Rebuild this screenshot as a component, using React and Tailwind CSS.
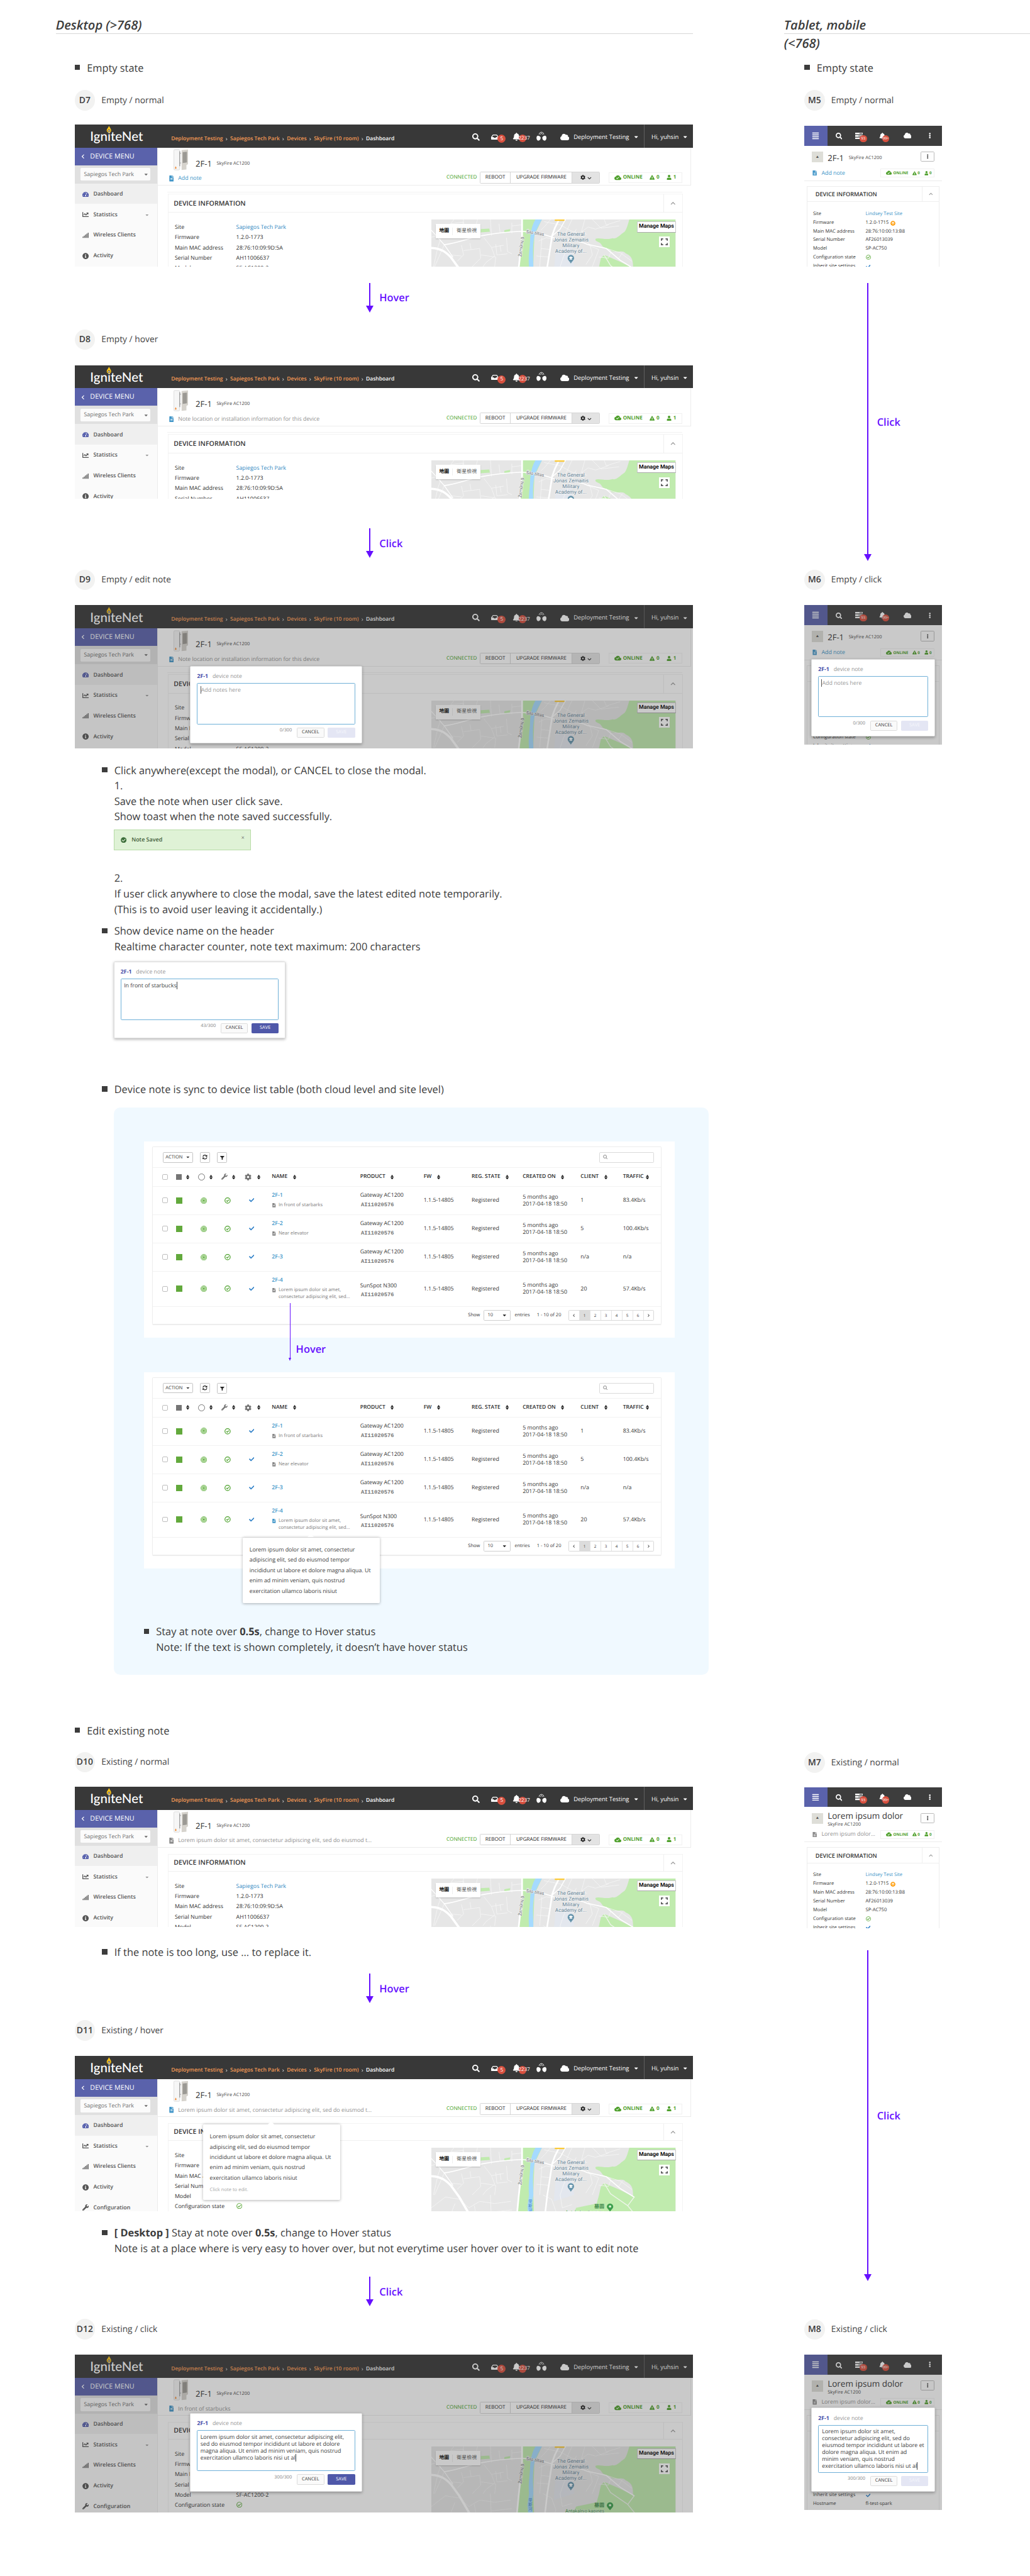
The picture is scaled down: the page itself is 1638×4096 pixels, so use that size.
import React from "react";
import {
  FaSearch, FaInbox, FaBell, FaCloud, FaCaretDown, FaTachometerAlt, FaChartLine, FaSignal,
  FaInfoCircle, FaWrench, FaFileAlt, FaCog, FaChevronDown, FaChevronUp, FaChevronLeft, FaChevronRight,
  FaExclamationTriangle, FaUser, FaCheck, FaSyncAlt, FaFilter, FaRegCheckCircle,
  FaArrowCircleUp, FaAlignJustify, FaEllipsisV, FaCheckCircle,
} from "react-icons/fa";
import { MdCloudDone } from "react-icons/md";

const WIDE_NOTE = [
  "Lorem ipsum dolor sit amet, consectetur adipiscing elit,",
  "sed do eiusmod tempor incididunt ut labore et dolore",
  "magna aliqua. Ut enim ad minim veniam, quis nostrud",
  "exercitation ullamco laboris nisi ut al",
];
const NARROW_NOTE = [
  "Lorem ipsum dolor sit amet,",
  "consectetur adipiscing elit, sed do",
  "eiusmod tempor incididunt ut labore et",
  "dolore magna aliqua. Ut enim ad",
  "minim veniam, quis nostrud",
  "exercitation ullamco laboris nisi ut al",
];

/* ---------- annotation pieces ---------- */

function ColumnTitle({ children, className = "" }) {
  return (
    <div className={"h-[63px] border-b-[1.5px] border-[#d6d6d6] pt-[31px] " + className}>
      <h1 className="w-[185px] text-[23.5px] leading-[33px] font-semibold text-[#3c3c3c] italic">{children}</h1>
    </div>
  );
}

function Bullet({ children, className = "" }) {
  return (
    <div className={"flex text-[19.2px] leading-[28.8px] text-[#3c3c3c] " + className}>
      <span className="mt-[9px] mr-[13px] size-[10px] shrink-0 bg-[#3c3c3c]" />
      <div className="pt-[0.5px]">{children}</div>
    </div>
  );
}

function StateLabel({ id, children, className = "" }) {
  return (
    <div className={"flex h-[38px] items-center " + className}>
      <span className="flex size-[38px] shrink-0 items-center justify-center rounded-full bg-[#f2f2f1] pt-[2px] text-[16.3px] font-semibold text-[#3c3c3c]">{id}</span>
      <span className="ml-[12px] pt-[1px] text-[16.2px] text-[#454545]">{children}</span>
    </div>
  );
}

function FlowArrow({ label, className = "" }) {
  return (
    <div className={"flex text-[#6610ff] " + className}>
      <div className="flex w-[15px] flex-col items-center">
        <span className="w-[2.3px] flex-1 bg-[#6610ff]" />
        <span className="h-0 w-0 border-x-[7.5px] border-t-[14px] border-x-transparent border-t-[#6610ff]" />
      </div>
      <span className="ml-[10px] self-center text-[19.2px] leading-[28px] font-semibold">{label}</span>
    </div>
  );
}

/* ---------- map ---------- */

function CityMap() {
  return (
    <svg viewBox="0 0 455 140" className="block h-[140px] w-[455px]">
      <rect width="455" height="140" fill="#e6e6e6" />
      <path d="M232 55 L262 52 L266 88 L228 100 Z" fill="#e3e7ee" />
      <path d="M170 0 L206 0 L192 30 L190 88 L192 140 L158 140 L164 88 L170 40 Z" fill="#c0ebae" />
      <path d="M92 18 L108 17 L109 23 L92 24 Z M136 20 L147 18 L146 23 L136 24 Z" fill="#c0ebae" />
      <path d="M369 0 C366 10 364 18 360 23 C350 30 345 37 338 35 C325 39 312 33 306 36 C304 42 314 40 317 47 C322 56 332 52 336 59 C348 62 356 56 362 63 C372 68 376 72 376 90 L376 140 L455 140 L455 0 Z" fill="#c0ebae" />
      <path d="M312 90 L316 72 L322 66 L350 78 L378 92 L378 140 L255 140 L270 112 L308 104 Z" fill="#c0ebae" />
      <path d="M194 0 L206 0 C201 10 193 22 191 36 C188 55 190 75 190 88 L187 110 L192 140 L182 140 L179 110 L182 88 C180 70 184 50 184 38 C185 20 189 8 194 0 Z" fill="#a5daff" />
      <g fill="none" stroke="#f7f7f7" strokeWidth="0.9">
        <path d="M0 33 L20 28 L36 8 L42 0 M20 28 L12 52 L4 88 M24 47 L6 88 M36 8 L60 5 L64 26 L74 30 M60 0 L58 12 M86 0 L82 16 L92 26 L90 34 M110 0 L112 30 M98 34 L106 44 L112 52 L135 48 M112 52 L118 68 L102 80 L96 88 M56 48 L60 66 L48 78 M60 58 L90 54 L92 72 L76 88 M72 44 L74 56 M92 66 L120 70 L118 88 M120 46 L122 66 L142 64 M128 48 L130 60 M140 34 L142 60 L150 64 M150 6 L150 26 M150 12 L168 10 M126 8 L128 24 M36 66 L56 68 M12 14 L24 18 M70 16 L82 16" />
        <path d="M0 112 L26 92 L52 96 L70 112 L90 100 L118 104 L148 100 M30 140 L44 104 M80 108 L86 140 M110 88 L112 140 M112 120 L150 116" />
        <path d="M222 0 L212 12 L204 20 M210 4 L240 10 L262 22 L276 26 L292 14 L306 18 L330 10 M262 0 L250 26 M286 0 L280 22 L290 28 M300 0 L316 16 L350 12 M322 0 L326 10 L352 2 M276 26 L296 48 L300 66 L288 84 M270 18 L246 70 L240 88 M226 36 L214 34 L200 40 M222 56 L204 54 M220 70 L196 68 M206 34 L202 88 M284 44 L312 56 L300 88 M326 54 L352 62 L374 78 M334 62 L330 72 L312 70 M356 62 L348 74 M208 88 L224 96 L232 118 L226 140 M240 88 L244 112 L262 106" />
      </g>
      <g fill="none" stroke="#fff" strokeLinecap="round">
        <path d="M0 53 C20 54 28 62 36 70 L52 92 L80 140" strokeWidth="4.2" />
        <path d="M24 47 C50 44 70 34 95 30 C125 24 145 23 169 22 L200 25 L222 32" strokeWidth="2" />
        <path d="M40 70 L24 47 L0 20" strokeWidth="1.5" />
        <path d="M169 0 L169 34 L163 88 L158 140" strokeWidth="3.2" />
        <path d="M238 0 C230 14 228 20 225 30 L221 57 L216 88 L210 140" strokeWidth="3" />
        <path d="M250 0 L240 18 L226 30 M222 32 C250 44 270 36 290 46 L326 54 L352 76 L378 92" strokeWidth="1.8" />
        <path d="M378 92 L366 108 L392 140 M322 66 L334 86 L366 108" strokeWidth="1.6" stroke="#eef5ea" />
      </g>
      <rect x="230" y="0" width="18" height="2.6" fill="#fcc934" />
      <g fontFamily="Roboto, sans-serif" fill="#5f7f93" textAnchor="middle">
        <g fontSize="9.6" stroke="#f4f4f4" strokeWidth="1.6" paintOrder="stroke">
          <text x="260" y="31">The General</text>
          <text x="260" y="41.3">Jonas Zemaitis</text>
          <text x="260" y="51.6">Military</text>
          <text x="260" y="62">Academy of...</text>
        </g>
        <g fontSize="8.2" fill="#70757a" stroke="#f4f4f4" strokeWidth="1.4" paintOrder="stroke">
          <text transform="translate(193 28) rotate(9)">Šilo tiltas</text>
          <text transform="translate(170 50) rotate(-85)">Žirmūnų g.</text>
        </g>
        <text x="286" y="123" fontSize="8.6" fill="#3f8a4c" stroke="#e5f6df" strokeWidth="1.2" paintOrder="stroke">Antakalnio kapinės</text>
        <text x="313" y="113" fontSize="9.4" fontWeight="bold" fill="#3f8a4c" fontFamily="'Noto Sans CJK TC', sans-serif">墓園</text>
        <g fontSize="8" fill="#4a86c5" fontFamily="'Noto Sans CJK TC', sans-serif">
          <text x="184.5" y="103">里</text>
          <text x="184.5" y="111">斯</text>
          <text x="184.5" y="119">河</text>
        </g>
      </g>
      <path d="M260 82 C257 77 254 75 254 72 A6 6 0 0 1 266 72 C266 75 263 77 260 82 Z" fill="#6694ab" />
      <path d="M256 71 L260 69 L264 71 L260 73 Z M257.5 73 h5 v1.6 h-5 Z" fill="#fff" />
      <path d="M333 119 C330 115 327 113 327 110 A6 6 0 0 1 339 110 C339 113 336 115 333 119 Z" fill="#3c9e4d" />
      <circle cx="333" cy="109.5" r="2.2" fill="#d6f2cf" />
    </svg>
  );
}

function MapPanel() {
  return (
    <div className="relative h-[140px] w-[455px]">
      <CityMap />
      <div className="absolute top-[8px] left-[8px] flex h-[27px] items-center bg-white text-[9.3px] shadow-[0_1px_2px_rgba(0,0,0,0.2)]">
        <span className="w-[32px] border-r border-[#eee] text-center font-bold text-black">地圖</span>
        <span className="w-[51px] text-center text-[#565656]">衛星檢視</span>
      </div>
      <div className="absolute top-[3.5px] right-0 flex h-[20px] w-[72px] items-center justify-center border border-[#c9c9c9] border-b-[#aaa] bg-white font-['Roboto'] text-[10.3px] font-semibold text-black">Manage Maps</div>
      <div className="absolute top-[31px] right-[11px] flex size-[20px] items-center justify-center bg-white">
        <svg viewBox="0 0 12 12" className="size-[13px]" fill="none" stroke="#5a5a5a" strokeWidth="1.9">
          <path d="M1 4 V1 H4 M8 1 H11 V4 M11 8 V11 H8 M4 11 H1 V8" />
        </svg>
      </div>
    </div>
  );
}

/* ---------- note dialog and tooltip ---------- */

function NoteDialog({ lines = [], placeholder, count, disabled, grow = "h-[76.5px]", narrow, className = "" }) {
  return (
    <div className={"rounded-[2px] border border-[#dcdcdc] bg-white px-[11.7px] pt-[10px] shadow-[0_2px_5px_rgba(0,0,0,0.28)] " + className}>
      <div className="h-[21px] text-[10.3px] leading-[18px] text-[#959595]">
        <b className="mr-[8px] font-bold text-[#3f4ba8]">2F-1</b>device note
      </div>
      <div className={"rounded-[2px] border-[1.2px] border-[#6fb0d8] bg-white pt-[5.5px] text-[10.4px] leading-[12.85px] whitespace-nowrap " + grow + (narrow ? " pl-[6px]" : " pl-[5px]") + (placeholder ? " text-[#9a9a9a]" : " text-[#3c3c3c]")}>
        {placeholder && <span className="border-l border-[#555]">{placeholder}</span>}
        {lines.map((line, i) => (
          <div key={line}>{line}{i === lines.length - 1 && <span className="border-l border-[#444]" />}</div>
        ))}
      </div>
      <div className="mt-[6px] flex justify-end">
        <span className="mt-[-1px] mr-[9px] text-[8.7px] leading-[14px] text-[#858585]">{count}</span>
        <span className="flex h-[19px] w-[51px] items-center justify-center rounded-[2px] border border-[#dcdcdc] bg-[#fafafa] text-[8.7px] text-[#333]">CANCEL</span>
        <span className={"ml-[6.5px] flex h-[19px] w-[51px] items-center justify-center rounded-[2px] text-[8.7px] " + (disabled ? "bg-[#e4e6f4] text-[#f6f7fc]" : "bg-[#4f58a9] text-white")}>SAVE</span>
      </div>
    </div>
  );
}

function Tooltip({ hint, className = "" }) {
  return (
    <div className={"absolute rounded-[2px] bg-white pt-[13.5px] pl-[13px] shadow-[0_1px_5px_rgba(0,0,0,0.3)] " + className}>
      <span className="absolute top-[-6px] left-[121px] h-0 w-0 border-x-[7px] border-b-[7px] border-x-transparent border-b-white" />
      <p className="text-[10.4px] leading-[19.2px] whitespace-nowrap text-[#404040]">
        Lorem ipsum dolor sit amet, consectetur<br />adipiscing elit, sed do eiusmod tempor<br />incididunt ut labore et dolore magna aliqua. Ut<br />enim ad minim veniam, quis nostrud<br />exercitation ullamco laboris nisiut
      </p>
      {hint && <p className="mt-[6px] text-[8.9px] leading-[16px] text-[#a8a8a8]">{hint}</p>}
    </div>
  );
}

/* ---------- desktop frame ---------- */

function Logo() {
  return (
    <div className="relative w-[179px] shrink-0 pt-[4px] pl-[28px]">
      <span className="font-['Lato'] text-[24px] leading-[30px] text-white">IgniteNet</span>
      <svg viewBox="0 0 10 14" className="absolute top-[-2px] left-[57.5px] h-[13px] w-[10px]">
        <path d="M5 0 C6 3 9.5 6 9.5 9.5 C9.5 12 7.5 13.5 5 13.5 C2.5 13.5 0.5 12 0.5 9.5 C0.5 6 4 4 5 0 Z" fill="#fbc51b" />
        <circle cx="5" cy="10" r="2.3" fill="#383838" />
        <circle cx="5" cy="10" r="1.3" fill="#fff" />
      </svg>
    </div>
  );
}

function Antenna() {
  return (
    <svg viewBox="0 0 19 18" className="h-[18px] w-[19px]" fill="none" stroke="#fff" strokeWidth="1.1">
      <path d="M5 5.5 C6 0 13 0 14 5.5 M7.2 6 C7.6 3.2 11.4 3.2 11.8 6" />
      <path d="M0.5 10 C2 6 6.5 8.5 8 11 C8 14 7 16 4.5 17 C1.5 18 -0.5 14 0.5 10 Z M18.5 10 C17 6 12.5 8.5 11 11 C11 14 12 16 14.5 17 C17.5 18 19.5 14 18.5 10 Z" fill="#fff" stroke="none" />
    </svg>
  );
}

function CountBadge({ children, className = "" }) {
  return (
    <span className={"absolute flex items-center justify-center rounded-full bg-[#d8503f] text-white " + className}>{children}</span>
  );
}

const MENU = [
  ["Dashboard", FaTachometerAlt],
  ["Statistics", FaChartLine],
  ["Wireless Clients", FaSignal],
  ["Activity", FaInfoCircle],
  ["Configuration", FaWrench],
];

function Sidebar() {
  return (
    <div className="w-[154px] shrink-0 border-r border-[#ececec] bg-[#fafafa] text-[10.4px] font-semibold text-[#555]">
      <div className="flex h-[33px] items-center bg-[#5a62ab] pl-[10px] text-[12.6px] font-medium text-white">
        <FaChevronLeft className="mr-[9px] size-[9px]" />DEVICE MENU
      </div>
      <div className="flex h-[34px] items-center bg-[#e0e0e0] pl-[10.5px]">
        <div className="flex h-[24px] w-[130px] items-center justify-between rounded-[2px] bg-[#fbfbfb] pr-[3px] pl-[6px] font-normal text-[#6c6c6c]">
          Sapiegos Tech Park<FaCaretDown className="size-[10px]" />
        </div>
      </div>
      {MENU.map(([name, Icon], i) => (
        <div key={name} className={"flex h-[38.3px] items-center pt-[1.5px] pl-[13px] " + (i === 0 ? "bg-[#efefef]" : "")}>
          <Icon className={"size-[12px] " + (i === 0 ? "text-[#4b55a8]" : "text-[#555]")} />
          <span className="ml-[9px]">{name}</span>
          {i === 1 && <FaCaretDown className="mr-[14px] ml-auto size-[9px] text-[#999]" />}
        </div>
      ))}
    </div>
  );
}

function DeviceShot() {
  return (
    <svg viewBox="0 0 27 40" className="mt-[3px] h-[40px] w-[27px] shrink-0">
      <rect x="0.5" y="1" width="11" height="38" rx="2" fill="#f6f6f6" stroke="#d2d2d2" strokeWidth="0.8" />
      <path d="M11.5 4 V32 M12 8 h1.5 M12 26 h1.5" stroke="#a5a5a5" strokeWidth="1.8" />
      <path d="M15 2 L27 1 V28 L24 30 V38 L15 39 Z" fill="#d6d3cd" />
      <path d="M17 6 L25 5 V25 L17 26 Z" fill="#9b9994" />
      <path d="M4 32 C5 34 6 35 5 36.5 H3 C2 35 3.5 34 4 32 Z" fill="#f08a35" />
    </svg>
  );
}

function StatusStrip() {
  return (
    <div className="flex h-[20px] w-[137.5px] items-center border border-[#f1f1f1] pl-[10px] text-[9.4px] font-bold text-[#4fa02d]">
      <MdCloudDone className="size-[13px]" /><span className="ml-[3px] w-[50px]">ONLINE</span>
      <FaExclamationTriangle className="size-[9.5px]" /><span className="ml-[3px] w-[19px]">0</span>
      <FaUser className="size-[9.5px]" /><span className="ml-[3px]">1</span>
    </div>
  );
}

function Crumb({ children }) {
  return (
    <>
      <span className="text-[#f59a55]">{children}</span>
      <FaChevronRight className="mx-[4px] size-[5.5px] text-[#ddd]" />
    </>
  );
}

const INFO = [
  ["Site", <span className="text-[#3189c2]">Sapiegos Tech Park</span>],
  ["Firmware", "1.2.0-1773"],
  ["Main MAC address", "28:76:10:09:9D:5A"],
  ["Serial Number", "AH11006637"],
  ["Model", "SF-AC1200-2"],
  ["Configuration state", <FaRegCheckCircle className="mt-[3px] size-[11px] text-[#55a532]" />],
];

function DesktopFrame({ note, noteClass = "text-[#919191]", iconClass = "text-[#4095c8]", compact, dimmed, children, className = "" }) {
  return (
    <div className={"relative ml-[36px] flex w-[1152px] flex-col overflow-hidden bg-white " + className}>
      <div className="flex h-[43px] shrink-0 items-center bg-[#383838] text-[11.1px] font-medium whitespace-nowrap text-white">
        <Logo />
        <div className="flex w-[561px] items-center pt-[11px] text-[10px] font-semibold">
          <Crumb>Deployment Testing</Crumb>
          <Crumb>Sapiegos Tech Park</Crumb>
          <Crumb>Devices</Crumb>
          <Crumb>SkyFire (10 room)</Crumb>
          Dashboard
        </div>
        <div className="flex flex-1 items-center self-stretch">
          <span className="w-[35px] pt-[4px]"><FaSearch className="size-[14px]" /></span>
          <span className="relative w-[40px] pt-[3px]">
            <FaInbox className="size-[14px]" />
            <CountBadge className="top-[6px] left-[12.5px] size-[15px] text-[9.4px]">5</CountBadge>
          </span>
          <span className="relative w-[45px] pt-[3px]">
            <FaBell className="size-[15px]" />
            <CountBadge className="top-[6px] left-[11.5px] size-[15px] text-[9.4px]"><span className="ml-[6px]">2237</span></CountBadge>
          </span>
          <span className="w-[44px]"><Antenna /></span>
          <span className="w-[25px] pt-[4px]"><FaCloud className="h-[16px] w-[17px]" /></span>
          <span className="w-[111px] pt-[4px]">Deployment Testing</span>
          <span className="w-[20px] pt-[4px]"><FaCaretDown className="size-[11px]" /></span>
          <span className="flex items-center self-stretch border-l border-[#606060] pt-[4px] pl-[13px]">
            <span className="w-[58px]">Hi, yuhsin</span><FaCaretDown className="size-[11px]" />
          </span>
        </div>
      </div>
      <div className="flex flex-1">
        <Sidebar />
        <div className="flex-1">
          <div className="h-[71px] w-[993.5px] border-r-2 border-b-2 border-[#ececec]">
            <div className="flex h-[42px] pl-[29px]">
              <DeviceShot />
              <span className="ml-[14.5px] pt-[20px] text-[15.3px] leading-[20px] text-[#333]">2F-1</span>
              <span className="ml-[9px] pt-[20px] text-[8.7px] leading-[21px] text-[#444]">SkyFire AC1200</span>
            </div>
            <div className="flex h-[28px] items-center pr-[15px] pl-[21px]">
              <FaFileAlt className={"mt-[4px] h-[11px] w-[9px] " + iconClass} />
              <span className={"mt-[4px] ml-[8px] text-[10.35px] " + noteClass}>{note}</span>
              <span className="mr-[5px] ml-auto text-[9.6px] text-[#3f9f1c]">CONNECTED</span>
              <div className="flex h-[21.5px] w-[224px] items-stretch rounded-[2px] border border-[#d5d5d5] text-[9.5px] text-[#222]">
                <span className="flex w-[57px] items-center justify-center border-r border-[#d5d5d5]">REBOOT</span>
                <span className="flex w-[115px] items-center justify-center border-r border-[#d5d5d5]">UPGRADE FIRMWARE</span>
                <span className="flex flex-1 items-center justify-center gap-[4px] bg-[#e3e3e3]"><FaCog className="size-[9.5px]" /><FaChevronDown className="mt-[3px] size-[8px]" /></span>
              </div>
              <div className="ml-[16px]"><StatusStrip /></div>
            </div>
          </div>
          {!compact && <div className="mt-[11px] ml-[18px] h-px w-[960px] bg-[#f2f2f2]" />}
          <div className={"ml-[18.5px] h-[400px] w-[960px] border-2 border-[#f3f3f3] " + (compact ? "mt-[11.5px]" : "mt-[2.5px]")}>
            <div className={"flex items-stretch border-b border-[#f0f0f0] " + (compact ? "h-[32px]" : "h-[35px]")}>
              <span className={"flex items-center pl-[10px] text-[12.5px] font-semibold text-[#333] " + (compact ? "" : "pt-[2px]")}>DEVICE INFORMATION</span>
              <span className="ml-auto flex w-[35px] items-center justify-center border-l border-[#efefef]"><FaChevronUp className="size-[10px] text-[#999]" /></span>
            </div>
            <div className="flex justify-between pt-[13px] pr-[12px] pl-[12px]">
              <div className="pt-[4px] text-[10.4px] leading-[19.15px] text-[#2f2f2f]">
                {INFO.map(([k, v]) => (
                  <div key={k} className="flex h-[19.15px]"><span className="w-[114.5px]">{k}</span><span>{v}</span></div>
                ))}
              </div>
              <MapPanel />
            </div>
          </div>
        </div>
      </div>
      {dimmed && <div className="absolute inset-0 bg-[rgba(60,60,60,0.28)]" />}
      {children}
    </div>
  );
}

/* ---------- mobile frame ---------- */

const MOBILE_INFO = [
  ["Site", <span className="text-[#4095c8]">Lindsey Test Site</span>],
  ["Firmware", <span className="flex items-center">1.2.0-1715<FaArrowCircleUp className="ml-[3px] size-[9.5px] text-[#ff9d0a]" /></span>],
  ["Main MAC address", "28:76:10:00:13:B8"],
  ["Serial Number", "AF26013039"],
  ["Model", "SP-AC750"],
  ["Configuration state", <FaRegCheckCircle className="mt-[2.5px] size-[9.5px] text-[#55a532]" />],
  ["Inherit site settings", <FaCheck className="mt-[3px] size-[9px] text-[#2f80c8]" />],
  ["Hostname", "fl-test-spark"],
];

function MobileFrame({ existing, dimmed, children, className = "" }) {
  return (
    <div className={"relative ml-[38px] w-[256px] overflow-hidden bg-white " + className}>
      <div className="flex h-[37px] items-stretch bg-[#3d3d3d] text-white">
        <span className="flex w-[43px] items-center justify-center bg-[#5a62ab]"><FaAlignJustify className="size-[14px]" /></span>
        <span className="flex w-[43px] items-center justify-center pt-[2px]"><FaSearch className="size-[12.5px]" /></span>
        <span className="relative flex w-[42px] items-center pl-[9px]">
          <svg viewBox="0 0 14 12" className="h-[12px] w-[14px]" fill="#fff"><path d="M0 0 H14 V3 H0 Z M0 4.5 H14 V7.5 H0 Z M0 9 H14 V12 H0 Z" /><path d="M8 1 h5 v1 h-5 Z M6 5.5 h7 v1 h-7 Z M9 10 h4 v1 h-4 Z" fill="#3d3d3d" /></svg>
          <CountBadge className="top-[17px] left-[17px] size-[13.5px] text-[7px]">93</CountBadge>
        </span>
        <span className="relative flex w-[43px] items-center pl-[11px]">
          <FaBell className="size-[12.5px]" />
          <CountBadge className="top-[17px] left-[17px] size-[13.5px] text-[7px] tracking-[-0.2px]">99+</CountBadge>
        </span>
        <span className="flex w-[42px] items-center justify-center"><FaCloud className="size-[15px]" /></span>
        <span className="flex flex-1 items-center justify-center"><FaEllipsisV className="h-[11px] w-[4px]" /></span>
      </div>
      <div className="h-[65.5px] border-b-[1.5px] border-[#ececec]">
        <div className="flex h-[41px] pr-[13px] pl-[14px]">
          <span className="mt-[11px] flex h-[20.5px] w-[21px] items-center justify-center bg-[#deded8] text-[5px] text-[#555]">▲</span>
          {existing ? (
            <div className="ml-[8.5px] pt-[7px] text-[#333]">
              <div className="text-[15.8px] leading-[20px] whitespace-nowrap">Lorem ipsum dolor</div>
              <div className="text-[8.7px] leading-[12px] text-[#444]">SkyFire AC1200</div>
            </div>
          ) : (
            <div className="ml-[8.5px] flex items-start pt-[10.5px] text-[#333]">
              <span className="text-[15.3px] leading-[24px]">2F-1</span>
              <span className="ml-[9px] text-[8.7px] leading-[25px] text-[#444]">SkyFire AC1200</span>
            </div>
          )}
          <span className="mt-[11px] ml-auto flex h-[19px] w-[26px] items-center justify-center rounded-[2px] border border-[#bbb] bg-[#fdfdfd]"><FaEllipsisV className="h-[9px] w-[3px] text-[#333]" /></span>
        </div>
        <div className="flex h-[20px] items-center pr-[13px] pl-[15px]">
          <FaFileAlt className={"h-[10px] w-[8.5px] " + (existing ? "text-[#888]" : "text-[#4095c8]")} />
          <span className={"ml-[8.5px] text-[10.35px] " + (existing ? "text-[#919191]" : "text-[#4095c8]")}>{existing ? "Lorem ipsum dolor..." : "Add note"}</span>
          <span className="ml-auto flex h-[16px] w-[101px] items-center border border-[#f1f1f1] pl-[9px] text-[7.3px] font-bold text-[#4fa02d]">
            <MdCloudDone className="size-[11px]" /><span className="ml-[2.5px] w-[35.5px]">ONLINE</span>
            <FaExclamationTriangle className="size-[8px]" /><span className="ml-[2px] w-[12px]">0</span>
            <FaUser className="size-[8px]" /><span className="ml-[2px]">0</span>
          </span>
        </div>
      </div>
      <div className="mt-[9.5px] ml-[4.5px] h-[300px] w-[247px] border-[1.5px] border-[#ededed]">
        <div className="flex h-[29px] border-b border-[#efefef]">
          <span className="flex items-center pt-px pl-[15px] text-[10.7px] font-semibold text-[#333]">DEVICE INFORMATION</span>
          <span className="ml-auto flex w-[31px] items-center justify-center border-l border-[#efefef]"><FaChevronUp className="size-[8px] text-[#999]" /></span>
        </div>
        <div className="pt-[14.5px] pl-[10.5px] text-[8.9px] leading-[16.3px] text-[#363636]">
          {MOBILE_INFO.map(([k, v]) => (
            <div key={k} className="flex h-[16.3px]"><span className="w-[98px]">{k}</span><span>{v}</span></div>
          ))}
        </div>
      </div>
      {dimmed && <div className="absolute inset-0 bg-[rgba(60,60,60,0.28)]" />}
      {children}
    </div>
  );
}

/* ---------- device table ---------- */

const HEADERS = ["NAME", "PRODUCT", "FW", "REG. STATE", "CREATED ON", "CLIENT", "TRAFFIC"];
const ROWS = [
  ["2F-1", ["In front of starbarks"], "Gateway AC1200", "1", "83.4Kb/s", "h-[53px]"],
  ["2F-2", ["Near elevator"], "Gateway AC1200", "5", "100.4Kb/s", "h-[52.5px]"],
  ["2F-3", null, "Gateway AC1200", "n/a", "n/a", "h-[53px]"],
  ["2F-4", ["Lorem ipsum dolor sit amet,", "consectetur adipiscing elit, sed..."], "SunSpot N300", "20", "57.4Kb/s", "h-[65.5px]"],
];
const GRID = "grid grid-cols-[26px_40px_44px_43px_51px_164.5px_118.5px_89.5px_95px_108px_79px_71px] items-center border-b border-[#f2f2f2] pl-[18px] ";

function Sorter({ className = "ml-[9px]" }) {
  return (
    <svg viewBox="0 0 6 9" className={"h-[9px] w-[6px] shrink-0 " + className} fill="#222"><path d="M3 0 L6 4 H0 Z M0 5 H6 L3 9 Z" /></svg>
  );
}

function Target() {
  return (
    <svg viewBox="0 0 12 12" className="ml-[5px] size-[12px]" fill="#d9efce" stroke="#58a836" strokeWidth="0.9">
      <circle cx="6" cy="6" r="5.5" /><circle cx="6" cy="6" r="3.5" /><circle cx="6" cy="6" r="1.3" fill="#3f9a1d" />
    </svg>
  );
}

function RoundCheck() {
  return (
    <svg viewBox="0 0 12 12" className="ml-[5.5px] size-[11.5px]" fill="none" stroke="#4aa029" strokeWidth="1.5">
      <circle cx="6" cy="6" r="5.1" /><path d="M3.6 6 L5.4 7.8 L8.5 4.4" />
    </svg>
  );
}

function Box() {
  return <span className="size-[10px] rounded-[2.5px] border border-[#bdbdbd] bg-white" />;
}

function DeviceTable({ hovered, className = "" }) {
  return (
    <div className={"h-[366px] w-[989px] bg-white pt-[10px] pl-[15.5px] text-[#363636] " + className}>
      <div className="w-[949px] rounded-[2px] border border-[#ededed] shadow-[0_1px_1px_rgba(0,0,0,0.08)]">
        <div className="flex h-[38.5px] items-center border-b border-[#f2f2f2] pr-[12px] pl-[18.5px]">
          <span className="flex h-[19.5px] w-[56.5px] items-center justify-center rounded-[2px] border border-[#c4c4c4] text-[8.8px]">ACTION<FaCaretDown className="ml-[5px] size-[9px]" /></span>
          <span className="ml-[12.5px] flex size-[19.5px] items-center justify-center rounded-[2px] border border-[#c4c4c4]"><FaSyncAlt className="size-[9px] text-[#222]" /></span>
          <span className="mt-[1px] ml-[12.5px] flex size-[19.5px] items-center justify-center rounded-[2px] border border-[#c4c4c4]"><FaFilter className="mt-[1px] size-[8px] text-[#222]" /></span>
          <span className="ml-auto flex h-[20px] w-[103px] items-center rounded-[2px] border border-[#dadada] pl-[6px]">
            <svg viewBox="0 0 10 10" className="size-[9px]" fill="none" stroke="#666"><circle cx="4" cy="4" r="3.2" /><path d="M6.5 6.5 L9.5 9.5" /></svg>
          </span>
        </div>
        <div className={GRID + "h-[34.5px] text-[10px] font-semibold whitespace-nowrap text-[#2a2a2a]"}>
          <Box />
          <span className="flex items-center"><i className="size-[10px] bg-[#757575]" /><Sorter className="ml-[8.5px]" /></span>
          <span className="flex items-center"><i className="size-[13.5px] rounded-full border-[1.5px] border-[#757575]" /><Sorter className="ml-[8.5px]" /></span>
          <span className="flex items-center"><FaWrench className="size-[11.5px] text-[#757575]" /><Sorter className="ml-[8.5px]" /></span>
          <span className="flex items-center"><FaCog className="size-[13px] text-[#757575]" /><Sorter className="ml-[11px]" /></span>
          {HEADERS.map((h) => (
            <span key={h} className="flex items-center">{h}<Sorter className={h === "TRAFFIC" ? "ml-[4px]" : "ml-[10px]"} /></span>
          ))}
        </div>
        {ROWS.map(([name, note, product, client, traffic, height], i) => (
          <div key={name} className={GRID + height + " text-[10.35px] whitespace-nowrap"}>
            <Box />
            <span className="size-[11.5px] bg-[#62a93c]" />
            <Target />
            <RoundCheck />
            <FaCheck className="ml-[8px] size-[10px] text-[#2f80c8]" />
            <div>
              <div className="leading-[18.5px] font-semibold text-[#4398ca]">{name}</div>
              {note && (
                <div className="flex py-[2.5px] text-[8.85px] leading-[13px] text-[#7a7a7a]">
                  <FaFileAlt className={"mt-[2.5px] mr-[5px] ml-[1px] h-[8px] w-[6.5px] " + (hovered && i === 3 ? "text-[#4095c8]" : "text-[#858585]")} />
                  <div>{note.map((l) => <div key={l}>{l}</div>)}</div>
                </div>
              )}
            </div>
            <div className={"leading-[18px] " + (i === 3 ? "pt-[7px]" : "")}>
              {product}
              <div className="pl-[1.5px] font-['Liberation_Mono'] text-[10.3px] font-bold text-[#777]">AI11020576</div>
            </div>
            <span>1.1.5-14805</span>
            <span>Registered</span>
            <div className="leading-[12.7px]">5 months ago<br />2017-04-18 18:50</div>
            <span>{client}</span>
            <span>{traffic}</span>
          </div>
        ))}
        <div className="flex h-[32.5px] items-center justify-end pr-[12px] text-[8.8px]">
          Show
          <span className="ml-[7px] flex h-[19.5px] w-[50.5px] items-center justify-between rounded-[2px] border border-[#cfcfcf] px-[6px]">10<FaCaretDown className="size-[10px] text-[#222]" /></span>
          <span className="ml-[7px]">entries</span>
          <span className="mr-[13px] ml-[13px]">1 - 10 of 20</span>
          <div className="flex h-[19.5px] w-[160.5px] items-stretch rounded-[2px] border border-[#d9d9d9] text-[7.5px]">
            {["prev", "1", "2", "3", "4", "5", "6", "next"].map((p) => (
              <span key={p} className={"flex flex-1 items-center justify-center border-r border-[#e3e3e3] last:border-r-0 " + (p === "1" ? "bg-[#dcdcdc]" : "")}>
                {p === "prev" ? <FaChevronLeft className="size-[6px]" /> : p === "next" ? <FaChevronRight className="size-[6px]" /> : p}
              </span>
            ))}
          </div>
        </div>
      </div>
    </div>
  );
}

/* ---------- page ---------- */

export default function App() {
  return (
    <div className="h-[4096px] w-[1638px] overflow-hidden bg-white">
      <div className="flex h-[4800px] w-[1920px] font-['Open_Sans','Noto_Sans_CJK_TC',sans-serif] [text-rendering:geometricPrecision] [zoom:0.85333]">
        <div className="ml-[104px] w-[1187px] shrink-0">
          <ColumnTitle>Desktop (&gt;768)</ColumnTitle>
          <Bullet className="mt-[48.5px] ml-[35px] h-[29px]">Empty state</Bullet>

          <StateLabel id="D7" className="mt-[27.5px] ml-[35px]">Empty / normal</StateLabel>
          <DesktopFrame note="Add note" noteClass="text-[#4095c8]" className="mt-[26px] h-[265.5px]" />
          <FlowArrow label="Hover" className="mt-[30px] ml-[578px] h-[54.5px]" />

          <StateLabel id="D8" className="mt-[32px] ml-[35px]">Empty / hover</StateLabel>
          <DesktopFrame note="Note location or installation information for this device" className="mt-[28.5px] h-[249px]" />
          <FlowArrow label="Click" className="mt-[55.5px] ml-[578px] h-[55px]" />

          <StateLabel id="D9" className="mt-[21.5px] ml-[35px]">Empty / edit note</StateLabel>
          <DesktopFrame note="Note location or installation information for this device" dimmed className="mt-[28.5px] h-[267px]">
            <NoteDialog placeholder="Add notes here" count="0/300" disabled className="absolute top-[113px] left-[214.5px] h-[144px] w-[320px]" />
          </DesktopFrame>

          <Bullet className="mt-[25.6px] ml-[86px]">
            Click anywhere(except the modal), or CANCEL to close the modal.<br />1.<br />Save the note when user click save.<br />Show toast when the note saved successfully.
            <div className="mt-[9.2px] ml-[-1px] flex h-[39px] w-[256px] items-center border border-[#b7dba6] bg-[#dff2d6] pr-[11px] pl-[12px] text-[10.5px] font-semibold text-[#3f5c3a]">
              <FaCheckCircle className="mr-[9px] size-[11px] text-[#3c6e3a]" />Note Saved
              <span className="mt-[-8px] ml-auto text-[11px] font-normal text-[#777]">×</span>
            </div>
            <div className="mt-[38.1px]">2.<br />If user click anywhere to close the modal, save the latest edited note temporarily.<br />(This is to avoid user leaving it accidentally.)</div>
          </Bullet>
          <Bullet className="mt-[11.6px] ml-[86px] h-[57.6px]">
            Show device name on the header<br />Realtime character counter, note text maximum: 200 characters
          </Bullet>
          <NoteDialog lines={["In front of starbucks"]} count="43/300" className="mt-[13.8px] ml-[108px] h-[143.5px] w-[320.5px]" />

          <Bullet className="mt-[80.1px] ml-[86px] h-[28.8px]">Device note is sync to device list table (both cloud level and site level)</Bullet>
          <div className="relative mt-[19.6px] ml-[108px] h-[1056.6px] w-[1109px] rounded-[12px] bg-[#f0f9ff] pt-[63px] pl-[56px]">
            <DeviceTable />
            <DeviceTable hovered className="mt-[64px]" />
            <Bullet className="mt-[103px]">
              Stay at note over <b>0.5s</b>, change to Hover status<br />Note: If the text is shown completely, it doesn’t have hover status
            </Bullet>
            <div className="absolute top-[365px] left-[325px] flex h-[107px] w-[7px] flex-col items-center">
              <span className="w-[1.3px] flex-1 bg-[#6610ff]" />
              <span className="h-0 w-0 border-x-[3.5px] border-t-[6px] border-x-transparent border-t-[#6610ff]" />
            </div>
            <span className="absolute top-[435.5px] left-[339.5px] text-[19.2px] leading-[28px] font-semibold text-[#6610ff]">Hover</span>
            <Tooltip className="top-[801px] left-[240px] h-[122px] w-[256px]" />
          </div>

          <Bullet className="mt-[89.7px] ml-[35px] h-[29px]">Edit existing note</Bullet>
          <StateLabel id="D10" className="mt-[25.7px] ml-[35px]">Existing / normal</StateLabel>
          <DesktopFrame note="Lorem ipsum dolor sit amet, consectetur adipiscing elit, sed do eiusmod t..." iconClass="text-[#888]" compact className="mt-[26.5px] h-[261px]" />
          <Bullet className="mt-[32.5px] ml-[86px] h-[28.8px]">If the note is too long, use ... to replace it.</Bullet>
          <FlowArrow label="Hover" className="mt-[26px] ml-[578px] h-[55px]" />

          <StateLabel id="D11" className="mt-[32.2px] ml-[35px]">Existing / hover</StateLabel>
          <DesktopFrame note="Lorem ipsum dolor sit amet, consectetur adipiscing elit, sed do eiusmod t..." compact className="mt-[28.3px] h-[289.7px]">
            <Tooltip hint="Click note to edit." className="top-[127.5px] left-[238px] h-[140.5px] w-[256.5px]" />
          </DesktopFrame>
          <Bullet className="mt-[25.6px] ml-[86px] h-[57.6px]">
            <b>[ Desktop ]</b> Stay at note over <b>0.5s</b>, change to Hover status<br />Note is at a place where is very easy to hover over, but not everytime user hover over to it is want to edit note
          </Bullet>
          <FlowArrow label="Click" className="mt-[39px] ml-[578px] h-[54.5px]" />

          <StateLabel id="D12" className="mt-[24px] ml-[35px]">Existing / click</StateLabel>
          <DesktopFrame note="In front of starbucks" compact dimmed className="mt-[28.3px] h-[294px]">
            <NoteDialog lines={WIDE_NOTE} count="300/300" className="absolute top-[108.5px] left-[214.5px] h-[147.5px] w-[320px]" />
          </DesktopFrame>
        </div>

        <div className="ml-[170px] flex-1">
          <ColumnTitle>Tablet, mobile (&lt;768)</ColumnTitle>
          <Bullet className="mt-[48.5px] ml-[38px] h-[29px]">Empty state</Bullet>

          <StateLabel id="M5" className="mt-[27.5px] ml-[38px]">Empty / normal</StateLabel>
          <MobileFrame className="mt-[28.5px] h-[263px]" />
          <FlowArrow label="Click" className="mt-[30px] ml-[148.5px] h-[518px]" />

          <StateLabel id="M6" className="mt-[16px] ml-[38px]">Empty / click</StateLabel>
          <MobileFrame dimmed className="mt-[28.5px] h-[260px]">
            <NoteDialog placeholder="Add notes here" count="0/300" disabled className="absolute top-[100px] left-[13px] h-[144px] w-[231px]" />
          </MobileFrame>

          <StateLabel id="M7" className="mt-[1877.5px] ml-[38px]">Existing / normal</StateLabel>
          <MobileFrame existing className="mt-[26.8px] h-[262.7px]" />
          <FlowArrow label="Click" className="mt-[41px] ml-[148.5px] h-[617px]" />

          <StateLabel id="M8" className="mt-[70.6px] ml-[38px]">Existing / click</StateLabel>
          <MobileFrame existing dimmed className="mt-[28.4px] h-[288.7px]">
            <NoteDialog lines={NARROW_NOTE} count="300/300" disabled narrow grow="h-[89px]" className="absolute top-[98.5px] left-[13px] h-[156.5px] w-[231px]" />
          </MobileFrame>
        </div>
      </div>
    </div>
  );
}
